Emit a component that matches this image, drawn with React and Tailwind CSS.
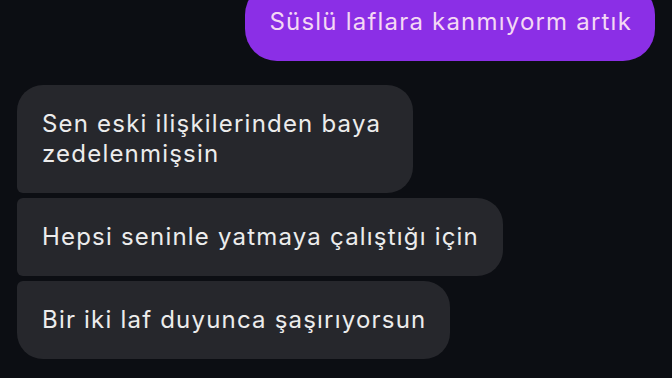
import React from "react";

const incoming = [
  { lines: ["Sen eski ilişkilerinden baya", "zedelenmişsin"], shape: "rounded-[26px] rounded-bl-[6px]", width: "w-[396px]" },
  { lines: ["Hepsi seninle yatmaya çalıştığı için"], shape: "rounded-[26px] rounded-tl-[6px] rounded-bl-[6px]", width: "w-fit" },
  { lines: ["Bir iki laf duyunca şaşırıyorsun"], shape: "rounded-[26px] rounded-tl-[6px]", width: "w-fit" },
];

const App = () => {
  return (
    <div
      className="w-[672px] h-[378px] overflow-hidden bg-[#0c0e13] flex flex-col"
      style={{ fontFamily: 'Inter, "Liberation Sans", Arial, sans-serif' }}
    >
      <div className="flex justify-end pr-[17px]">
        <div className="-mt-[17px] h-[78px] flex items-center pl-[24px] pr-[23px] rounded-[32px] bg-[#8b2fe6] text-[#f4d8f4] text-[24px] leading-[30px] tracking-[1.2px] whitespace-nowrap">
          Süslü laflara kanmıyorm artık
        </div>
      </div>

      <div className="mt-[24px] pl-[17px] flex flex-col gap-[5px]">
        {incoming.map((msg, i) => (
          <div
            key={i}
            className={`${msg.width} ${msg.shape} bg-[#26272c] text-[#ececec] text-[24px] leading-[30px] tracking-[1.2px] py-[24px] pl-[25px] pr-[24px] whitespace-nowrap`}
          >
            {msg.lines.map((line, j) => (
              <div key={j}>{line}</div>
            ))}
          </div>
        ))}
      </div>
    </div>
  );
};

export default App;
